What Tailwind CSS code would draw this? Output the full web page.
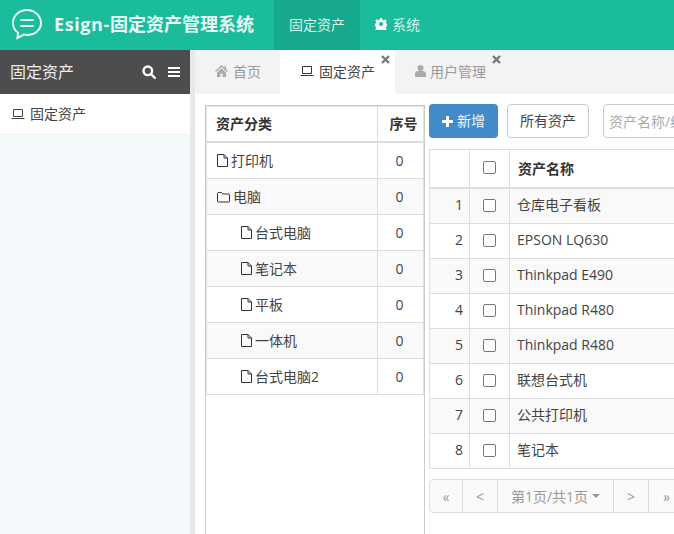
<!DOCTYPE html>
<html lang="zh">
<head>
  <meta charset="UTF-8">
  <title>Esign-固定资产管理系统</title>
  <script src="https://cdn.jsdelivr.net/npm/@tailwindcss/browser@4"></script>
</head>
<body class="w-[674px] h-[534px] overflow-hidden font-['Open_Sans','Noto_Sans_CJK_SC',sans-serif] text-[14px] text-[#444]">
  <!-- Header -->
  <header class="h-[50px] bg-[#1abc9c] flex items-stretch text-white">
    <div class="w-[274px] flex items-center pl-[11px] pb-[2px]">
      <svg class="w-[32px] h-[32px]" viewBox="0 0 32 32" fill="none" stroke="#e4f8f3" stroke-width="2" stroke-linecap="round">
        <path d="M16 2C8 2 2 7.800 2 15c0 4 1.800 7.400 5 9.800L6.500 30l6.200-3.400c1 .2 2.200.4 3.300.4 8 0 14-5.300 14-12S24 2 16 2z"/>
        <path d="M10 12h12M10 18h12"/>
      </svg>
      <span class="ml-[11px] text-[18px] font-bold text-[#e8faf6]"><span class="tracking-[0.6px]">Esign-</span>固定资产管理系统</span>
    </div>
    <div class="w-[86px] bg-[#17a98c] flex items-center justify-center pb-[2px] text-[#d5f3ec] text-[14px]">固定资产</div>
    <div class="flex items-center pl-[15px] pb-[2px] text-[#d5f3ec] text-[14px]">
      <svg class="w-[12px] h-[12px] mr-[5px]" viewBox="0 0 24 24" fill="#eefbf8">
        <path fill-rule="evenodd" d="M10 0h4l1 3.500 2.500 1 3.200-1.800 2.800 2.800-1.800 3.200 1 2.500 3.500 1v4l-3.500 1-1 2.500 1.800 3.200-2.800 2.800-3.200-1.800-2.500 1-1 3.500h-4l-1-3.500-2.500-1-3.200 1.800-2.800-2.800 1.800-3.200-1-2.500-3.500-1v-4l3.500-1 1-2.500-1.800-3.200 2.800-2.800 3.200 1.800 2.500-1zM12 8a4 4 0 100 8 4 4 0 000-8z"/>
      </svg>
      系统
    </div>
  </header>

  <div class="flex h-[484px]">
    <!-- Sidebar -->
    <aside class="w-[190px] shrink-0 bg-[#f3f8fb] flex flex-col">
      <div class="h-[44px] bg-[#4e4d4d] flex items-center justify-between pl-[10px] pr-[10px] text-[#eee] text-[16px]">
        <span>固定资产</span>
        <div class="flex items-center gap-[12px]">
          <svg class="w-[14px] h-[14px]" viewBox="0 0 14 14" fill="none" stroke="#fff" stroke-width="2.400" stroke-linecap="round"><circle cx="5.800" cy="5.800" r="4.300"/><path d="M9 9l3.800 3.800"/></svg>
          <svg class="w-[12px] h-[12px]" viewBox="0 0 12 12" fill="#fff"><path d="M0 1h12v2H0zM0 5h12v2H0zM0 9h12v2H0z"/></svg>
        </div>
      </div>
      <div class="h-[41px] bg-white border-b border-[#f0f0f0] flex items-center pl-[11px] pb-[2px] text-[14px] text-[#444]">
        <svg class="w-[14px] h-[12px] mr-[5px] mt-[2px]" viewBox="0 0 14 12" fill="none" stroke="#444"><path d="M2.500 1.500h9v7h-9zM.5 10.500h13"/></svg>
        固定资产
      </div>
    </aside>
    <div class="w-[5px] shrink-0 bg-[#e8e8e8]"></div>

    <main class="flex-1 min-w-0 flex flex-col">
      <!-- Tabs -->
      <nav class="h-[44px] shrink-0 bg-[#f3f3f3] flex items-stretch text-[14px] text-[#999]">
        <div class="w-[85px] flex items-center pl-[20px] pb-[2px]">
          <svg class="w-[13px] h-[12px] mr-[5px]" viewBox="0 0 13 12" fill="#aaa"><path d="M6.500 0L0 6l1 1 5.500-5 5.500 5 1-1-2-1.900V1H9.500v1.700zM2 7.500V12h3.300V8.500h2.400V12H11V7.500L6.500 3.300z"/></svg>
          首页
        </div>
        <div class="relative w-[115px] bg-white flex items-center pl-[20px] pb-[2px] text-[#444]">
          <svg class="w-[14px] h-[12px] mr-[5px]" viewBox="0 0 14 12" fill="none" stroke="#333"><path d="M2.500 1.500h9v7h-9zM.5 10.500h13"/></svg>
          固定资产
          <svg class="absolute top-[5px] right-[5px] w-[9px] h-[9px]" viewBox="0 0 9 9" stroke="#777" stroke-width="2.400"><path d="M1 1l7 7M8 1L1 8"/></svg>
        </div>
        <div class="relative w-[111px] flex items-center pl-[20px] pb-[2px]">
          <svg class="w-[11px] h-[12px] mr-[4px]" viewBox="0 0 11 12" fill="#aaa"><circle cx="5.500" cy="3" r="3"/><path d="M0 12V9c0-2 1.500-3 3-3h5c1.500 0 3 1 3 3v3z"/></svg>
          用户管理
          <svg class="absolute top-[5px] right-[5px] w-[9px] h-[9px]" viewBox="0 0 9 9" stroke="#777" stroke-width="2.400"><path d="M1 1l7 7M8 1L1 8"/></svg>
        </div>
      </nav>

      <div class="flex-1 min-h-0 flex items-stretch pt-[11px] pl-[10px] overflow-hidden">
        <!-- Category tree -->
        <div class="w-[220px] shrink-0 border-x border-t border-[#ccc] text-[14px] -mb-px">
          <div class="border-x border-t border-[#e2e2e2]">
            <div class="h-[36px] flex border-b-2 border-[#ddd] font-bold text-[#333]">
              <div class="w-[170px] flex items-center pl-[9px] pb-[2px]">资产分类</div>
              <div class="flex-1 border-l border-[#ddd] flex items-center justify-center pl-[6px] pb-[2px]">序号</div>
            </div>
            <div class="h-[36px] flex border-b border-[#ddd]">
              <div class="w-[170px] flex items-center pl-[10px]">
                <svg class="w-[11px] h-[13px] mr-[3px]" viewBox="0 0 11 13" fill="none" stroke="#333"><path d="M.5.5h6.500l3.500 3.500v8.500h-10zM7 .5V4h3.500"/></svg>打印机
              </div>
              <div class="flex-1 border-l border-[#ddd] flex items-center justify-center pr-[2px]">0</div>
            </div>
            <div class="h-[36px] flex border-b border-[#ddd] bg-[#f9f9f9]">
              <div class="w-[170px] flex items-center pl-[10px]">
                <svg class="w-[13px] h-[12px] mr-[3px]" viewBox="0 0 13 12" fill="none" stroke="#333"><path d="M.5 2.500a1 1 0 011-1h3l1.500 1.500h5.500a1 1 0 011 1v6a1 1 0 01-1 1h-10a1 1 0 01-1-1z"/></svg>电脑
              </div>
              <div class="flex-1 border-l border-[#ddd] flex items-center justify-center pr-[2px]">0</div>
            </div>
            <div class="h-[36px] flex border-b border-[#ddd]">
              <div class="w-[170px] flex items-center pl-[34px]">
                <svg class="w-[11px] h-[13px] mr-[3px]" viewBox="0 0 11 13" fill="none" stroke="#333"><path d="M.5.5h6.500l3.500 3.500v8.500h-10zM7 .5V4h3.500"/></svg>台式电脑
              </div>
              <div class="flex-1 border-l border-[#ddd] flex items-center justify-center pr-[2px]">0</div>
            </div>
            <div class="h-[36px] flex border-b border-[#ddd] bg-[#f9f9f9]">
              <div class="w-[170px] flex items-center pl-[34px]">
                <svg class="w-[11px] h-[13px] mr-[3px]" viewBox="0 0 11 13" fill="none" stroke="#333"><path d="M.5.5h6.500l3.500 3.500v8.500h-10zM7 .5V4h3.500"/></svg>笔记本
              </div>
              <div class="flex-1 border-l border-[#ddd] flex items-center justify-center pr-[2px]">0</div>
            </div>
            <div class="h-[36px] flex border-b border-[#ddd]">
              <div class="w-[170px] flex items-center pl-[34px]">
                <svg class="w-[11px] h-[13px] mr-[3px]" viewBox="0 0 11 13" fill="none" stroke="#333"><path d="M.5.5h6.500l3.500 3.500v8.500h-10zM7 .5V4h3.500"/></svg>平板
              </div>
              <div class="flex-1 border-l border-[#ddd] flex items-center justify-center pr-[2px]">0</div>
            </div>
            <div class="h-[36px] flex border-b border-[#ddd] bg-[#f9f9f9]">
              <div class="w-[170px] flex items-center pl-[34px]">
                <svg class="w-[11px] h-[13px] mr-[3px]" viewBox="0 0 11 13" fill="none" stroke="#333"><path d="M.5.5h6.500l3.500 3.500v8.500h-10zM7 .5V4h3.500"/></svg>一体机
              </div>
              <div class="flex-1 border-l border-[#ddd] flex items-center justify-center pr-[2px]">0</div>
            </div>
            <div class="h-[36px] flex border-b border-[#ddd]">
              <div class="w-[170px] flex items-center pl-[34px]">
                <svg class="w-[11px] h-[13px] mr-[3px]" viewBox="0 0 11 13" fill="none" stroke="#333"><path d="M.5.5h6.500l3.500 3.500v8.500h-10zM7 .5V4h3.500"/></svg>台式电脑2
              </div>
              <div class="flex-1 border-l border-[#ddd] flex items-center justify-center pr-[2px]">0</div>
            </div>
          </div>
        </div>

        <!-- Asset list -->
        <div class="ml-[4px] -mt-px w-[300px] shrink-0 flex flex-col">
          <div class="h-[34px] flex items-stretch text-[14px]">
            <div class="w-[69px] shrink-0 rounded-[4px] bg-[#428bca] text-[#f2f7fb] flex items-center justify-center pb-[2px] whitespace-nowrap">
              <svg class="w-[11px] h-[11px] mr-[4px] mt-[2px]" viewBox="0 0 11 11" fill="#fff"><path d="M4 0h3v4h4v3H7v4H4V7H0V4h4z"/></svg>新增
            </div>
            <div class="ml-[9px] w-[82px] shrink-0 rounded-[4px] border border-[#ccc] flex items-center justify-center pb-[2px] text-[14px] text-[#444] whitespace-nowrap">所有资产</div>
            <div class="ml-[14px] w-[200px] shrink-0 rounded-[4px] border border-[#ccc] flex items-center pl-[5px] text-[#aaa] whitespace-nowrap text-[14px]">资产名称/编号</div>
          </div>

          <div class="mt-[11px] w-[300px] border-t border-l border-[#ddd] text-[14px]">
            <div class="h-[39px] flex border-b-2 border-[#ddd]">
              <div class="w-[40px] border-r border-[#ddd]"></div>
              <div class="w-[40px] border-r border-[#ddd] flex items-center justify-center pb-[2px]"><span class="w-[13px] h-[13px] border border-[#777] rounded-[2px]"></span></div>
              <div class="flex-1 flex items-center pl-[8px] font-bold text-[14px] text-[#333]">资产名称</div>
            </div>
            <div class="h-[35px] flex border-b border-[#ddd] bg-[#f9f9f9]">
              <div class="w-[40px] border-r border-[#ddd] flex items-center justify-end pr-[6px] pb-[4px]">1</div>
              <div class="w-[40px] border-r border-[#ddd] flex items-center justify-center pb-[2px]"><span class="w-[13px] h-[13px] border border-[#777] rounded-[2px] bg-white"></span></div>
              <div class="flex-1 flex items-center pl-[7px] pb-[4px]">仓库电子看板</div>
            </div>
            <div class="h-[35px] flex border-b border-[#ddd]">
              <div class="w-[40px] border-r border-[#ddd] flex items-center justify-end pr-[6px] pb-[4px]">2</div>
              <div class="w-[40px] border-r border-[#ddd] flex items-center justify-center pb-[2px]"><span class="w-[13px] h-[13px] border border-[#777] rounded-[2px] bg-white"></span></div>
              <div class="flex-1 flex items-center pl-[7px] pb-[4px]">EPSON LQ630</div>
            </div>
            <div class="h-[35px] flex border-b border-[#ddd] bg-[#f9f9f9]">
              <div class="w-[40px] border-r border-[#ddd] flex items-center justify-end pr-[6px] pb-[4px]">3</div>
              <div class="w-[40px] border-r border-[#ddd] flex items-center justify-center pb-[2px]"><span class="w-[13px] h-[13px] border border-[#777] rounded-[2px] bg-white"></span></div>
              <div class="flex-1 flex items-center pl-[7px] pb-[4px]">Thinkpad E490</div>
            </div>
            <div class="h-[35px] flex border-b border-[#ddd]">
              <div class="w-[40px] border-r border-[#ddd] flex items-center justify-end pr-[6px] pb-[4px]">4</div>
              <div class="w-[40px] border-r border-[#ddd] flex items-center justify-center pb-[2px]"><span class="w-[13px] h-[13px] border border-[#777] rounded-[2px] bg-white"></span></div>
              <div class="flex-1 flex items-center pl-[7px] pb-[4px]">Thinkpad R480</div>
            </div>
            <div class="h-[35px] flex border-b border-[#ddd] bg-[#f9f9f9]">
              <div class="w-[40px] border-r border-[#ddd] flex items-center justify-end pr-[6px] pb-[4px]">5</div>
              <div class="w-[40px] border-r border-[#ddd] flex items-center justify-center pb-[2px]"><span class="w-[13px] h-[13px] border border-[#777] rounded-[2px] bg-white"></span></div>
              <div class="flex-1 flex items-center pl-[7px] pb-[4px]">Thinkpad R480</div>
            </div>
            <div class="h-[35px] flex border-b border-[#ddd]">
              <div class="w-[40px] border-r border-[#ddd] flex items-center justify-end pr-[6px] pb-[4px]">6</div>
              <div class="w-[40px] border-r border-[#ddd] flex items-center justify-center pb-[2px]"><span class="w-[13px] h-[13px] border border-[#777] rounded-[2px] bg-white"></span></div>
              <div class="flex-1 flex items-center pl-[7px] pb-[4px]">联想台式机</div>
            </div>
            <div class="h-[35px] flex border-b border-[#ddd] bg-[#f9f9f9]">
              <div class="w-[40px] border-r border-[#ddd] flex items-center justify-end pr-[6px] pb-[4px]">7</div>
              <div class="w-[40px] border-r border-[#ddd] flex items-center justify-center pb-[2px]"><span class="w-[13px] h-[13px] border border-[#777] rounded-[2px] bg-white"></span></div>
              <div class="flex-1 flex items-center pl-[7px] pb-[4px]">公共打印机</div>
            </div>
            <div class="h-[35px] flex border-b border-[#ddd]">
              <div class="w-[40px] border-r border-[#ddd] flex items-center justify-end pr-[6px] pb-[4px]">8</div>
              <div class="w-[40px] border-r border-[#ddd] flex items-center justify-center pb-[2px]"><span class="w-[13px] h-[13px] border border-[#777] rounded-[2px] bg-white"></span></div>
              <div class="flex-1 flex items-center pl-[7px] pb-[4px]">笔记本</div>
            </div>
          </div>

          <!-- Pagination -->
          <div class="mt-[10px] h-[34px] w-[300px] flex border border-[#ddd] rounded-[4px] text-[#999] text-[14px] bg-[#fafafa]">
            <div class="w-[33px] border-r border-[#ddd] flex items-center justify-center">«</div>
            <div class="w-[35px] border-r border-[#ddd] flex items-center justify-center">&lt;</div>
            <div class="w-[116px] border-r border-[#ddd] flex items-center justify-center">第1页/共1页<span class="ml-[4px] border-x-[4px] border-x-transparent border-t-[4px] border-t-[#999]"></span></div>
            <div class="w-[35px] border-r border-[#ddd] flex items-center justify-center">&gt;</div>
            <div class="w-[35px] flex items-center justify-center">»</div>
          </div>
        </div>
      </div>
    </main>
  </div>
</body>
</html>
